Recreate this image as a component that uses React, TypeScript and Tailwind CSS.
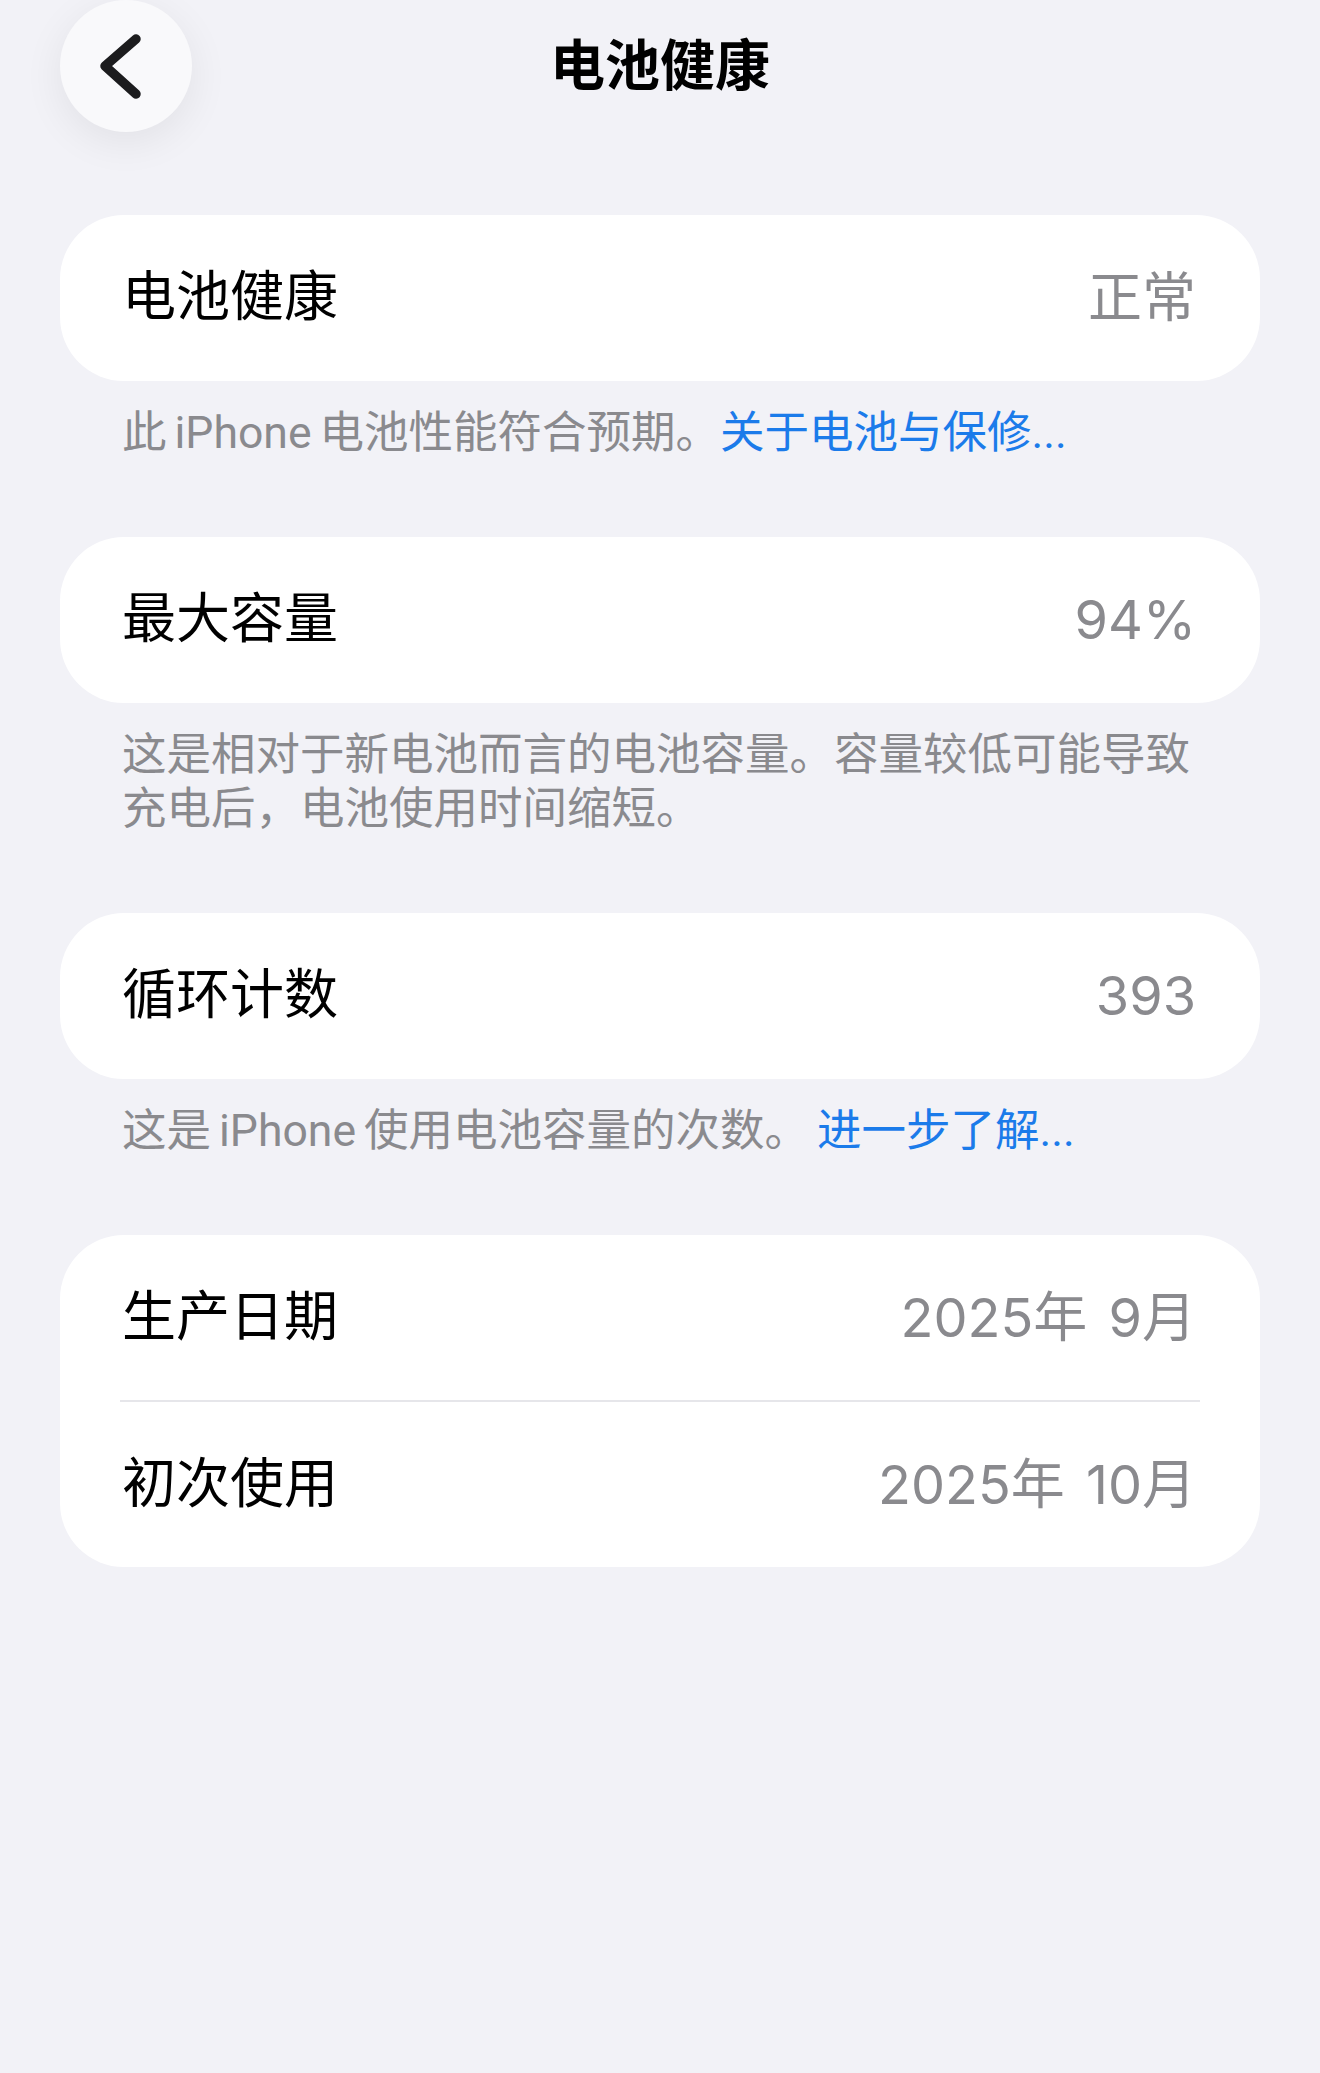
import React from "react";

const FONT = 'Roboto, "Noto Sans CJK SC", sans-serif';
const VALUE_FONT = 'Inter, "Noto Sans CJK SC", sans-serif';

function Row({ label, value, tall = true }: { label: string; value: string; tall?: boolean }) {
  return (
    <div
      className={
        tall
          ? "flex h-[166px] items-center justify-between pl-[62px] pr-[64px]"
          : "flex h-[165px] items-center justify-between pl-[62px] pr-[64px]"
      }
    >
      <span className="text-[54px] leading-none text-black">{label}</span>
      <span
        className="text-[54px] leading-none text-[#8a8a8e] [word-spacing:6px]"
        style={{ fontFamily: VALUE_FONT }}
      >
        {value}
      </span>
    </div>
  );
}

function Card({ children }: { children: React.ReactNode }) {
  return <div className="mx-[60px] overflow-hidden rounded-[64px] bg-white">{children}</div>;
}

function Footer({ children }: { children: React.ReactNode }) {
  return (
    <p className="mb-[77px] ml-[122px] mr-[120px] mt-[25px] text-[44.5px] leading-[54px] text-[#8a8a8e] [word-spacing:-3px]">
      {children}
    </p>
  );
}

export default function App() {
  return (
    <div className="min-h-[2073px] w-full bg-[#f2f2f7]" style={{ fontFamily: FONT }}>
      <div className="grid h-[132px] grid-cols-[1fr_auto_1fr] items-center px-[60px]">
        <div>
          <div className="flex h-[132px] w-[132px] items-center justify-center rounded-full bg-[#f9f9fb] shadow-[0_10px_40px_rgba(0,0,0,0.07)]">
            <svg width="132" height="132" viewBox="0 0 132 132" fill="none">
              <path d="M76 39 L45 66 L76 94" stroke="#1c1c1e" strokeWidth="9.5" strokeLinecap="round" strokeLinejoin="round" />
            </svg>
          </div>
        </div>
        <h1 className="text-[55px] font-semibold leading-none text-black">电池健康</h1>
        <div />
      </div>

      <div className="h-[83px]" />

      <Card>
        <Row label="电池健康" value="正常" />
      </Card>
      <Footer>
        此 iPhone 电池性能符合预期。<span className="text-[#1b7bea]">关于电池与保修...</span>
      </Footer>

      <Card>
        <Row label="最大容量" value="94%" />
      </Card>
      <Footer>这是相对于新电池而言的电池容量。容量较低可能导致充电后，电池使用时间缩短。</Footer>

      <Card>
        <Row label="循环计数" value="393" />
      </Card>
      <Footer>
        这是 iPhone 使用电池容量的次数。 <span className="text-[#1b7bea]">进一步了解...</span>
      </Footer>

      <Card>
        <Row label="生产日期" value="2025年 9月" tall={false} />
        <div className="mx-[60px] h-[2px] bg-[#e6e6ea]" />
        <Row label="初次使用" value="2025年 10月" tall={false} />
      </Card>
    </div>
  );
}
